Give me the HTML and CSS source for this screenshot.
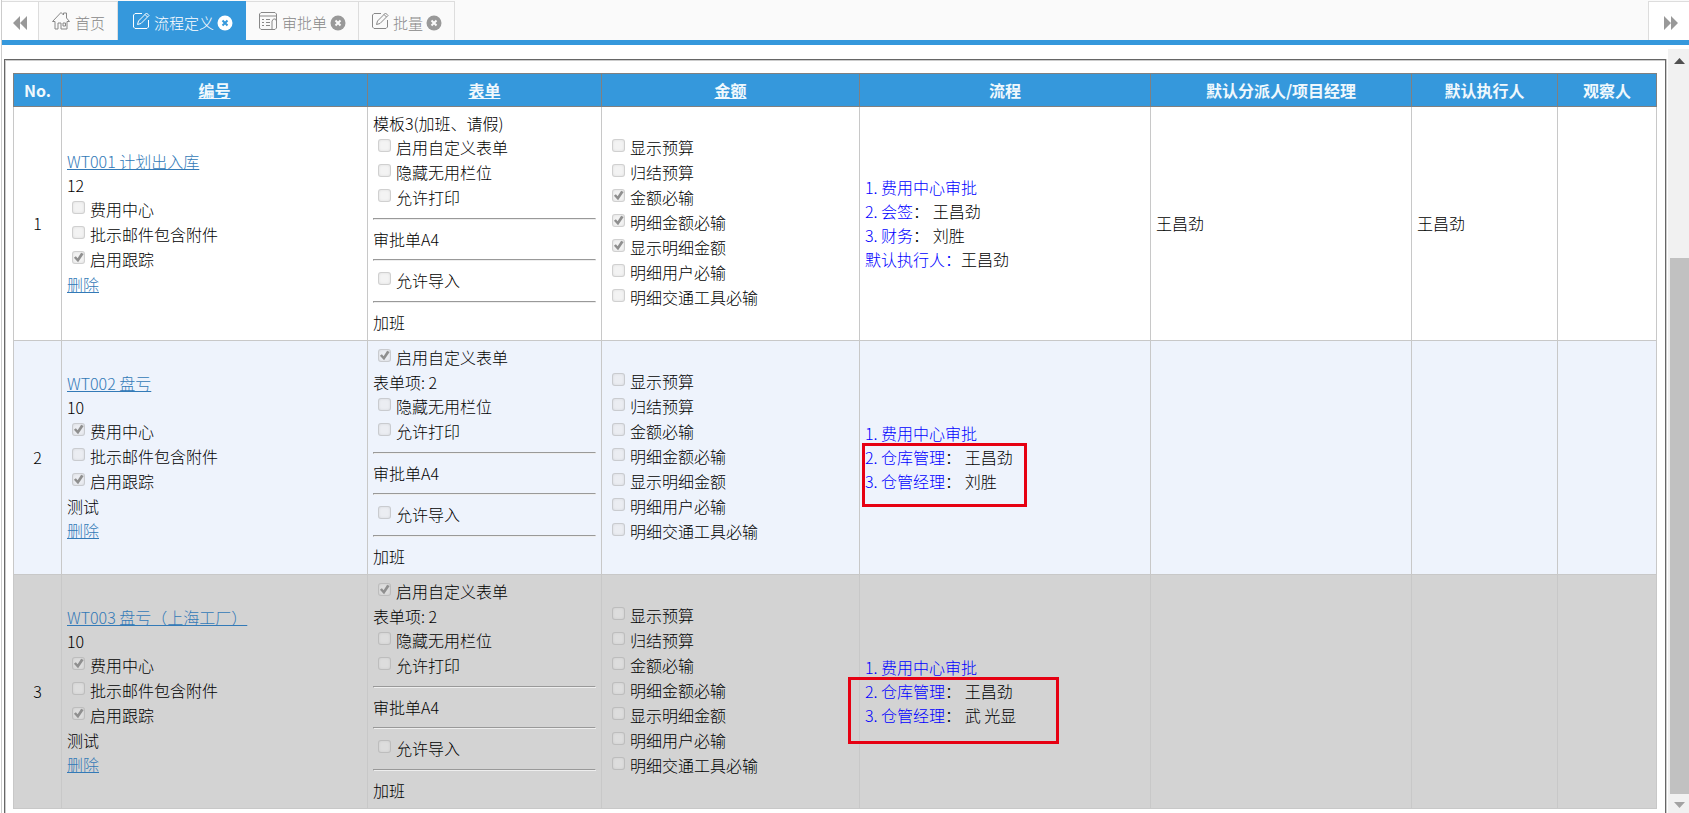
FILE: index.html
```html
<!DOCTYPE html>
<html lang="zh-CN">
<head>
<meta charset="utf-8">
<title>流程定义</title>
<link rel="stylesheet" href="styles.css">
</head>
<body>
<nav class="tabbar">
  <button class="scroll-btn" type="button" aria-label="向左"><svg width="14" height="14" viewBox="0 0 14 14"><path d="M7 0v14L0 7zM14 0v14L7 7z"/></svg></button>
  <a class="tab" href="#"><svg class="icon home" width="20" height="20" viewBox="0 0 20 20"><path d="M1.500 10.500L10 1.500l2.500 2.500V2h3v5l3 3.500M1.500 10.500h2.500M16 10.500h2.500M4 10.500v7.500h3v-6h3v6h6V10.500M12 12h2.500v3H12z"/></svg>首页</a>
  <a class="tab active" href="#"><svg class="icon" width="18" height="18" viewBox="0 0 18 18"><path d="M10 1.500H3L1.500 3v12L3 16.500h12l1.500-1.500V8M6.500 9l8-8 2.500 2.500-8 8-3.500 1zM13 2.500L15.500 5"/></svg>流程定义<button class="close" type="button" aria-label="关闭"><svg width="16" height="16" viewBox="0 0 16 16"><circle cx="8" cy="8" r="7.500"/><path d="M5.500 5.500l5 5M10.500 5.500l-5 5"/></svg></button></a>
  <a class="tab" href="#"><svg class="icon" width="20" height="20" viewBox="0 0 20 20"><path d="M14 18.500H3L1.500 17V3L3 1.500h14L18.500 3v14L17 18.500h-3V10l1.500-2h2L18.500 10M1.500 5h17M4 8.500h2M8 8.500h4M4 11.500h2M8 11.500h4M4 14.500h2M8 14.500h4"/></svg>审批单<button class="close" type="button" aria-label="关闭"><svg width="16" height="16" viewBox="0 0 16 16"><circle cx="8" cy="8" r="7.500"/><path d="M5.500 5.500l5 5M10.500 5.500l-5 5"/></svg></button></a>
  <a class="tab" href="#"><svg class="icon" width="18" height="18" viewBox="0 0 18 18"><path d="M10 1.500H3L1.500 3v12L3 16.500h12l1.500-1.500V8M6.500 9l8-8 2.500 2.500-8 8-3.500 1zM13 2.500L15.500 5"/></svg>批量<button class="close" type="button" aria-label="关闭"><svg width="16" height="16" viewBox="0 0 16 16"><circle cx="8" cy="8" r="7.500"/><path d="M5.500 5.500l5 5M10.500 5.500l-5 5"/></svg></button></a>
  <button class="scroll-btn next" type="button" aria-label="向右"><svg width="14" height="14" viewBox="0 0 14 14"><path d="M0 0v14l7-7zM7 0v14l7-7z"/></svg></button>
</nav>
<div class="workspace">
<main class="panel">
<table class="grid">
<colgroup><col class="c-no"><col class="c-code"><col class="c-form"><col class="c-amount"><col class="c-flow"><col class="c-manager"><col class="c-exec"><col class="c-watch"></colgroup>
<thead>
<tr><th>No.</th><th><a href="#">编号</a></th><th><a href="#">表单</a></th><th><a href="#">金额</a></th><th>流程</th><th>默认分派人/项目经理</th><th>默认执行人</th><th>观察人</th></tr>
</thead>
<tbody>
<tr>
<td class="no">1</td>
<td>
<div><a href="#">WT001 计划出入库</a></div>
<div>12</div>
<label class="check"><input type="checkbox" disabled>费用中心</label>
<label class="check"><input type="checkbox" disabled>批示邮件包含附件</label>
<label class="check"><input type="checkbox" checked disabled>启用跟踪</label>
<div><a href="#">删除</a></div>
</td>
<td>
<div>模板3(加班、请假)</div>
<label class="check"><input type="checkbox" disabled>启用自定义表单</label>
<label class="check"><input type="checkbox" disabled>隐藏无用栏位</label>
<label class="check"><input type="checkbox" disabled>允许打印</label>
<hr>
<div>审批单A4</div>
<hr>
<label class="check"><input type="checkbox" disabled>允许导入</label>
<hr>
<div>加班</div>
</td>
<td>
<label class="check"><input type="checkbox" disabled>显示预算</label>
<label class="check"><input type="checkbox" disabled>归结预算</label>
<label class="check"><input type="checkbox" checked disabled>金额必输</label>
<label class="check"><input type="checkbox" checked disabled>明细金额必输</label>
<label class="check"><input type="checkbox" checked disabled>显示明细金额</label>
<label class="check"><input type="checkbox" disabled>明细用户必输</label>
<label class="check"><input type="checkbox" disabled>明细交通工具必输</label>
</td>
<td>
<div><span class="step">1. 费用中心审批</span></div>
<div><span class="step">2. 会签</span>： 王昌劲</div>
<div><span class="step">3. 财务</span>： 刘胜</div>
<div><span class="step">默认执行人：</span>王昌劲</div>
</td>
<td>王昌劲</td>
<td>王昌劲</td>
<td></td>
</tr>
<tr class="alt">
<td class="no">2</td>
<td>
<div><a href="#">WT002 盘亏</a></div>
<div>10</div>
<label class="check"><input type="checkbox" checked disabled>费用中心</label>
<label class="check"><input type="checkbox" disabled>批示邮件包含附件</label>
<label class="check"><input type="checkbox" checked disabled>启用跟踪</label>
<div>测试</div>
<div><a href="#">删除</a></div>
</td>
<td>
<label class="check"><input type="checkbox" checked disabled>启用自定义表单</label>
<div>表单项: 2</div>
<label class="check"><input type="checkbox" disabled>隐藏无用栏位</label>
<label class="check"><input type="checkbox" disabled>允许打印</label>
<hr>
<div>审批单A4</div>
<hr>
<label class="check"><input type="checkbox" disabled>允许导入</label>
<hr>
<div>加班</div>
</td>
<td>
<label class="check"><input type="checkbox" disabled>显示预算</label>
<label class="check"><input type="checkbox" disabled>归结预算</label>
<label class="check"><input type="checkbox" disabled>金额必输</label>
<label class="check"><input type="checkbox" disabled>明细金额必输</label>
<label class="check"><input type="checkbox" disabled>显示明细金额</label>
<label class="check"><input type="checkbox" disabled>明细用户必输</label>
<label class="check"><input type="checkbox" disabled>明细交通工具必输</label>
</td>
<td>
<div><span class="step">1. 费用中心审批</span></div>
<div class="marked">
<div><span class="step">2. 仓库管理</span>： 王昌劲</div>
<div><span class="step">3. 仓管经理</span>： 刘胜</div>
<i class="mark"></i>
</div>
</td>
<td></td>
<td></td>
<td></td>
</tr>
<tr class="selected">
<td class="no">3</td>
<td>
<div><a href="#">WT003 盘亏（上海工厂）</a></div>
<div>10</div>
<label class="check"><input type="checkbox" checked disabled>费用中心</label>
<label class="check"><input type="checkbox" disabled>批示邮件包含附件</label>
<label class="check"><input type="checkbox" checked disabled>启用跟踪</label>
<div>测试</div>
<div><a href="#">删除</a></div>
</td>
<td>
<label class="check"><input type="checkbox" checked disabled>启用自定义表单</label>
<div>表单项: 2</div>
<label class="check"><input type="checkbox" disabled>隐藏无用栏位</label>
<label class="check"><input type="checkbox" disabled>允许打印</label>
<hr>
<div>审批单A4</div>
<hr>
<label class="check"><input type="checkbox" disabled>允许导入</label>
<hr>
<div>加班</div>
</td>
<td>
<label class="check"><input type="checkbox" disabled>显示预算</label>
<label class="check"><input type="checkbox" disabled>归结预算</label>
<label class="check"><input type="checkbox" disabled>金额必输</label>
<label class="check"><input type="checkbox" disabled>明细金额必输</label>
<label class="check"><input type="checkbox" disabled>显示明细金额</label>
<label class="check"><input type="checkbox" disabled>明细用户必输</label>
<label class="check"><input type="checkbox" disabled>明细交通工具必输</label>
</td>
<td>
<div><span class="step">1. 费用中心审批</span></div>
<div class="marked">
<div><span class="step">2. 仓库管理</span>： 王昌劲</div>
<div><span class="step">3. 仓管经理</span>： 武 光显</div>
<i class="mark wide"></i>
</div>
</td>
<td></td>
<td></td>
<td></td>
</tr>
</tbody>
</table>
</main>
<div class="scrollbar">
  <svg class="arrow" width="11" height="6" viewBox="0 0 11 6"><path d="M0 6L5.500 0 11 6z"/></svg>
  <div class="track"><div class="thumb"></div></div>
  <svg class="arrow dim" width="11" height="6" viewBox="0 0 11 6"><path d="M0 0h11L5.500 6z"/></svg>
</div>
</div>
</body>
</html>
```
FILE: styles.css
```css
* {
  box-sizing: border-box;
}

body {
  margin: 0 0 0 1px;
  height: 100vh;
  overflow: hidden;
  display: flex;
  flex-direction: column;
  border-left: 1px solid #ccc;
  background: #fff;
  color: #000;
  font: 300 16px/24px "Noto Sans CJK SC", sans-serif;
}

button {
  padding: 0;
  border: 0;
  background: none;
  font: inherit;
  color: inherit;
}

/* tab strip */
.tabbar {
  flex: none;
  display: flex;
  height: 45px;
  padding-top: 1px;
  border-bottom: 5px solid #3598dc;
  background: #fafafa;
  color: #999;
  font-size: 15px;
}

.scroll-btn {
  display: flex;
  align-items: center;
  justify-content: center;
  width: 37px;
  padding-top: 3px;
  border: solid #ddd;
  border-width: 1px 1px 0 0;
  background: #fff;
}

.scroll-btn svg {
  fill: #999;
}

.scroll-btn.next {
  width: 41px;
  margin-left: auto;
  padding-left: 4px;
  border-width: 1px 0 0 1px;
}

.tab {
  display: flex;
  align-items: center;
  padding: 3px 12px 0;
  border: solid #ddd;
  border-width: 1px 1px 0 0;
  color: #888;
  text-decoration: none;
}

.tab.active {
  padding-left: 14px;
  background: #3598dc;
  border-color: #3598dc;
  color: #fff;
}

.icon {
  margin: 0 4px 4px 0;
  fill: none;
  stroke: currentColor;
  stroke-width: 1;
}

.close {
  display: flex;
  margin-left: 3px;
}

.close svg {
  fill: #999;
  stroke: #fafafa;
  stroke-width: 2;
}

.close circle {
  stroke: none;
}

.active .close svg {
  fill: #fff;
  stroke: #3598dc;
}

/* content and scrollbar */
.workspace {
  flex: 1;
  min-height: 0;
  display: flex;
  padding-top: 4px;
}

.panel {
  flex: 1;
  margin: 10px 2px 0;
  padding: 13px 8px 0;
  border: 1px solid #666;
  border-bottom: 0;
  box-shadow: inset 1px 1px #ccc, 1px 0 #ccc;
}

.scrollbar {
  flex: none;
  display: flex;
  flex-direction: column;
  align-items: center;
  gap: 5px;
  width: 21px;
  padding: 9px 0 5px 2px;
  background: #f1f1f1;
}

.arrow {
  flex: none;
  fill: #505050;
}

.arrow.dim {
  fill: #a3a3a3;
}

.track {
  flex: 1;
  display: flex;
  flex-direction: column;
  justify-content: flex-end;
  align-self: stretch;
  padding-bottom: 3px;
}

.thumb {
  height: 74%;
  background: #c1c1c1;
}

/* data table */
.grid {
  width: 100%;
  table-layout: fixed;
  border-collapse: collapse;
}

.c-no { width: 48px; }
.c-code { width: 306px; }
.c-form { width: 234px; }
.c-amount { width: 258px; }
.c-flow { width: 291px; }
.c-manager { width: 261px; }
.c-exec { width: 146px; }

th {
  height: 33px;
  padding: 3px 5px 4px;
  border: 1px solid #808080;
  background: #3598dc;
  color: #f0f8fd;
  font-weight: 700;
}

th a {
  color: inherit;
}

td {
  height: 234px;
  padding: 4px 5px 6px;
  border: 1px solid #c8c8c8;
  vertical-align: middle;
}

td a {
  color: #337ab7;
}

.no {
  text-align: center;
}

.alt td {
  background: #eef3fc;
}

.selected td {
  background: #d3d3d3;
}

.step {
  color: #00f;
}

.check {
  display: flex;
  height: 25px;
  padding-left: 5px;
  gap: 5px;
  line-height: 25px;
}

.check input {
  appearance: none;
  flex: none;
  width: 13px;
  height: 13px;
  margin: 4px 0 0;
  border: 1px solid rgba(0, 0, 0, 0.14);
  border-radius: 3px;
  background: rgba(232, 232, 232, 0.5);
  box-shadow: inset 0 0 3px rgba(0, 0, 0, 0.08);
}

.check input:checked::before {
  content: "";
  display: block;
  width: 11px;
  height: 11px;
  background: #8f8f8f;
  clip-path: polygon(8% 52%, 26% 38%, 42% 56%, 74% 6%, 97% 18%, 46% 94%);
}

hr {
  margin: 8px 0 7px;
  border: 1px solid #999;
  border-right-color: #eee;
  border-bottom-color: #eee;
}

.marked {
  position: relative;
}

/* highlight frame drawn over the steps */
.mark {
  position: absolute;
  top: -2px;
  left: -3px;
  width: 165px;
  height: 64px;
  border: 3px solid #e60012;
}

.mark.wide {
  left: -17px;
  width: 211px;
  height: 67px;
}
```
